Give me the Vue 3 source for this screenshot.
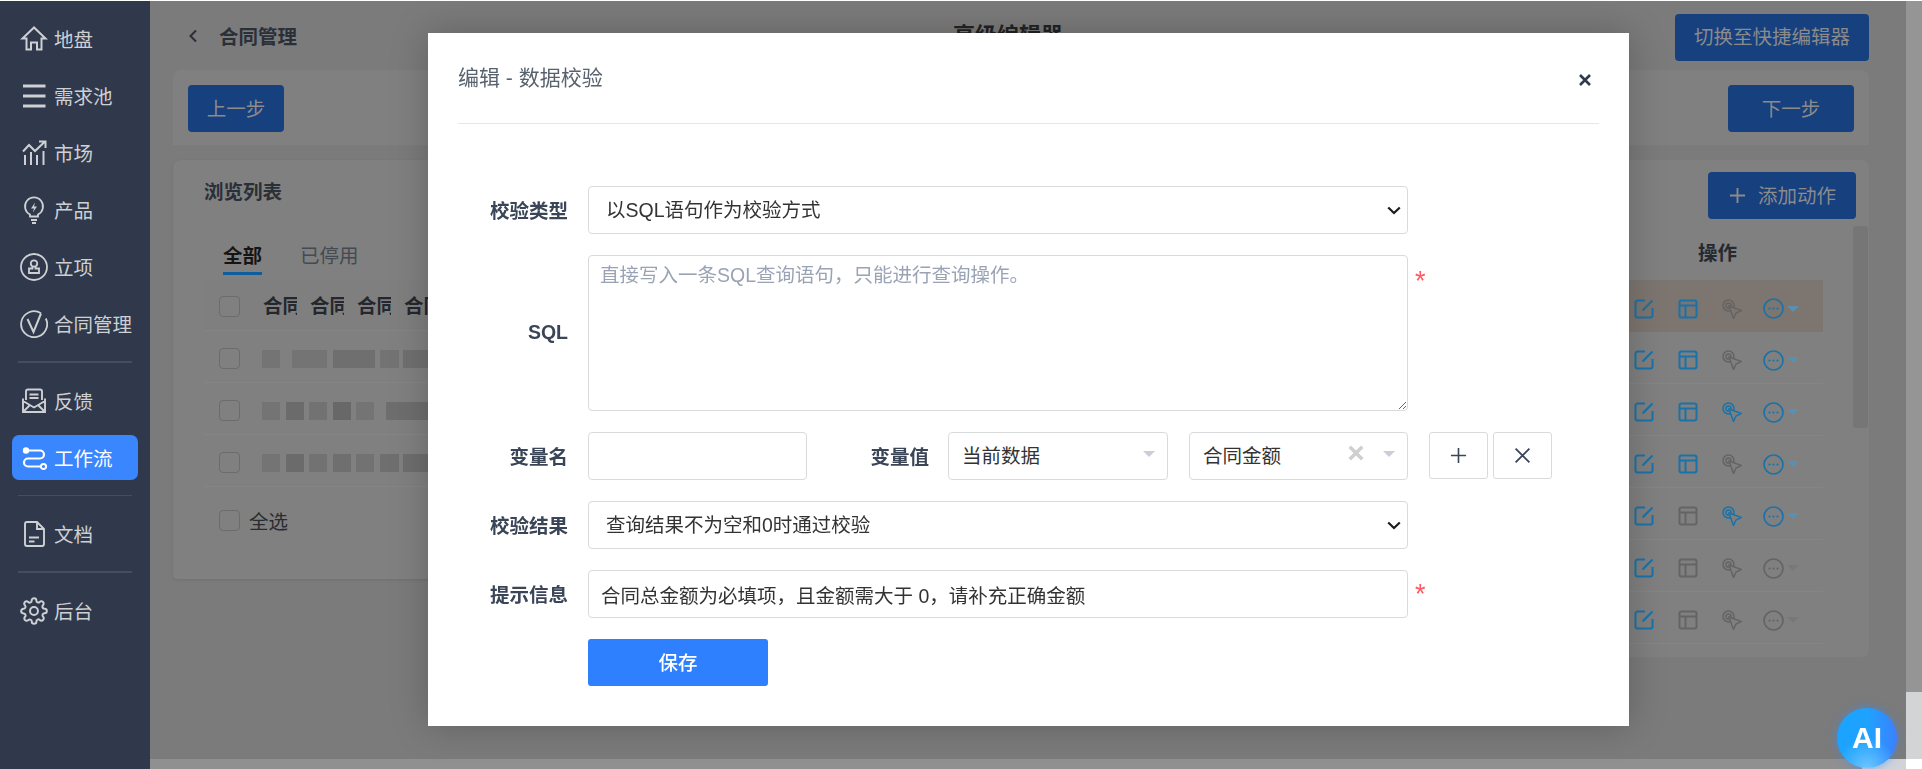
<script setup>
const circ = (cx, cy, r) => `M${cx - r} ${cy}a${r} ${r} 0 1 0 ${2 * r} 0a${r} ${r} 0 1 0 ${-2 * r} 0Z`

const navTop = [
  { label: '地盘', paths: [{ d: 'M14 2.5 2.5 13.5H6.5V24.5H11V17.5H17V24.5H21.5V13.5H25.5Z' }] },
  { label: '需求池', paths: [{ d: 'M3 4H25.5M3 14H25.5M3 24H25.5', w: 3 }] },
  { label: '市场', paths: [{ d: 'M3 12.5 9 6l6 6L25 2.5M19 2.5h6.5V9' }, { d: 'M5 26V16M11 26V13M17 26V16M23.5 26V12' }] },
  { label: '产品', paths: [{ d: 'M10 18.5A9 9 0 1 1 18 18.5V20.5H10Z', w: 1.8 }, { d: 'M11 24H17M12 27H16', w: 1.8 }, { d: 'M15 6.5 11 12.5H14L12.8 16.5 17 10.5H14Z', fill: true }] },
  { label: '立项', paths: [{ d: circ(14, 14, 13), w: 1.8 }, { d: circ(14, 10.5, 3.2) + 'M12.5 13.5V15.5H9V20H19V15.5H15.5V13.5', w: 1.8 }] },
  { label: '合同管理', paths: [{ d: 'M21 3.2A13 13 0 1 0 25.8 8.5', w: 1.8 }, { d: 'M7.5 9 13.5 22 21 3.5', w: 2 }] }
]
const navMail = { label: '反馈', paths: [{ d: 'M6 13V4.5A2 2 0 0 1 8 2.5H20A2 2 0 0 1 22 4.5V13M9.5 7.5H18.5M9.5 11H18.5' }, { d: 'M3 11.5V25H25V11.5M3 14 14 20.5 25 14M3 25 10 18M25 25 18 18' }] }
const navFlow = { label: '工作流', active: true, paths: [{ d: 'M7 6.5H20A4 4 0 0 1 20 14.5H8A4 4 0 0 0 8 22.5H20.5', w: 2.2 }, { d: circ(6, 6.5, 3.2), fill: true }, { d: circ(23.5, 22.5, 2.6), w: 2 }] }
const navDoc = { label: '文档', paths: [{ d: 'M7 2H17L24 9V24A2 2 0 0 1 22 26H7A2 2 0 0 1 5 24V4A2 2 0 0 1 7 2ZM17 2V9H24M9 17.5H19M9 21.5H14.5' }] }
const navGear = { label: '后台', gear: true, paths: [] }

const headCells = ['合同名称', '合同编号', '合同金额', '合同类型']
const blurRows = [
  [[0, 18, '#747474'], [12, 35, '#747474'], [6, 42, '#6f6f6f'], [5, 19, '#737373'], [4, 25, '#707070']],
  [[0, 18, '#747474'], [6, 18, '#6b6b6b'], [5, 18, '#727272'], [6, 18, '#686868'], [5, 18, '#747474'], [12, 42, '#6e6e6e']],
  [[0, 18, '#747474'], [6, 18, '#6b6b6b'], [5, 18, '#727272'], [6, 18, '#6f6f6f'], [5, 18, '#727272'], [6, 19, '#6f6f6f'], [4, 25, '#6e6e6e']]
]
const actionRows = [
  { hot: true, table: true, target: false, more: true },
  { table: true, target: false, more: true },
  { table: true, target: true, more: true },
  { table: true, target: false, more: true },
  { table: false, target: true, more: true },
  { table: false, target: false, more: false },
  { table: false, target: false, more: false }
]
</script>

<template>
  <div class="root">
    <aside class="sidebar">
      <template v-for="item in navTop" :key="item.label">
        <div class="nav-item">
          <svg class="nav-icon" viewBox="0 0 28 28" fill="none" stroke="currentColor" stroke-width="2">
            <path v-for="(p, i) in item.paths" :key="i" :d="p.d" :stroke-width="p.w || 2" :fill="p.fill ? 'currentColor' : 'none'" :stroke="p.fill ? 'none' : 'currentColor'" />
          </svg>
          <span>{{ item.label }}</span>
        </div>
      </template>
      <div class="nav-divider thick"></div>
      <div class="nav-item">
        <svg class="nav-icon" viewBox="0 0 28 28" fill="none" stroke="currentColor">
          <path v-for="(p, i) in navMail.paths" :key="i" :d="p.d" stroke-width="1.9" />
        </svg>
        <span>{{ navMail.label }}</span>
      </div>
      <div class="nav-item active">
        <svg class="nav-icon" viewBox="0 0 28 28" fill="none">
          <path v-for="(p, i) in navFlow.paths" :key="i" :d="p.d" :stroke-width="p.w || 2" :fill="p.fill ? 'currentColor' : 'none'" :stroke="p.fill ? 'none' : 'currentColor'" />
        </svg>
        <span>{{ navFlow.label }}</span>
      </div>
      <div class="nav-divider"></div>
      <div class="nav-item">
        <svg class="nav-icon" viewBox="0 0 28 28" fill="none" stroke="currentColor" stroke-width="1.9">
          <path v-for="(p, i) in navDoc.paths" :key="i" :d="p.d" />
        </svg>
        <span>{{ navDoc.label }}</span>
      </div>
      <div class="nav-divider thick"></div>
      <div class="nav-item">
        <svg class="nav-icon" viewBox="0 0 24 24" fill="none" stroke="currentColor" stroke-width="1.7">
          <circle cx="12" cy="12" r="3.4" />
          <path d="M19.4 15a1.65 1.65 0 0 0 .33 1.82l.06.06a2 2 0 0 1 0 2.83 2 2 0 0 1-2.83 0l-.06-.06a1.65 1.65 0 0 0-1.82-.33 1.65 1.65 0 0 0-1 1.51V21a2 2 0 0 1-2 2 2 2 0 0 1-2-2v-.09A1.65 1.65 0 0 0 9 19.4a1.65 1.65 0 0 0-1.82.33l-.06.06a2 2 0 0 1-2.83 0 2 2 0 0 1 0-2.83l.06-.06a1.65 1.65 0 0 0 .33-1.82 1.65 1.65 0 0 0-1.51-1H3a2 2 0 0 1-2-2 2 2 0 0 1 2-2h.09A1.65 1.65 0 0 0 4.6 9a1.65 1.65 0 0 0-.33-1.82l-.06-.06a2 2 0 0 1 0-2.83 2 2 0 0 1 2.83 0l.06.06a1.65 1.65 0 0 0 1.82.33H9a1.65 1.65 0 0 0 1-1.51V3a2 2 0 0 1 2-2 2 2 0 0 1 2 2v.09a1.65 1.65 0 0 0 1 1.51 1.65 1.65 0 0 0 1.82-.33l.06-.06a2 2 0 0 1 2.83 0 2 2 0 0 1 0 2.83l-.06.06a1.65 1.65 0 0 0-.33 1.82V9a1.65 1.65 0 0 0 1.51 1H21a2 2 0 0 1 2 2 2 2 0 0 1-2 2h-.09a1.65 1.65 0 0 0-1.51 1z" />
        </svg>
        <span>{{ navGear.label }}</span>
      </div>
    </aside>

    <div class="page">
      <div class="page-top">
        <main class="main">
          <header class="head">
            <div class="crumb">
              <svg class="chev" viewBox="0 0 10 14" fill="none" stroke="currentColor" stroke-width="2"><path d="M8 1.5 2.5 7 8 12.5" /></svg>
              <span>合同管理</span>
            </div>
            <div class="head-title">高级编辑器</div>
            <button class="btn switch">切换至快捷编辑器</button>
          </header>

          <section class="card steps">
            <button class="btn prev">上一步</button>
            <button class="btn next">下一步</button>
          </section>

          <section class="list">
            <div class="card list-left">
              <div class="list-title">浏览列表</div>
              <div class="tabs">
                <div class="tab on">全部</div>
                <div class="tab">已停用</div>
              </div>
              <div class="trow thead">
                <span class="check"></span>
                <div class="cells">
                  <span v-for="c in headCells" :key="c" class="hcell">{{ c.slice(0, 2) }}</span>
                </div>
              </div>
              <div v-for="(row, r) in blurRows" :key="r" class="trow">
                <span class="check"></span>
                <div class="blurs">
                  <i v-for="(b, i) in row" :key="i" :style="{ marginLeft: b[0] + 'px', width: b[1] + 'px', background: b[2] }"></i>
                </div>
              </div>
              <div class="tfoot">
                <span class="check"></span>
                <span>全选</span>
              </div>
            </div>

            <div class="card list-right">
              <button class="btn add">
                <svg viewBox="0 0 18 18" fill="none" stroke="currentColor" stroke-width="2"><path d="M9 1V17M1 9H17" /></svg>
                <span>添加动作</span>
              </button>
              <div class="act-head">操作</div>
              <div v-for="(a, i) in actionRows" :key="i" class="act-row" :class="{ hot: a.hot }">
                <svg class="ic on" viewBox="0 0 20 20" fill="none" stroke="currentColor" stroke-width="2"><path d="M11 1.5H3.5a2 2 0 0 0-2 2V16.500a2 2 0 0 0 2 2H16.500a2 2 0 0 0 2-2V9M8.500 11.500 18.500 1.500" /></svg>
                <svg class="ic" :class="{ on: a.table }" viewBox="0 0 20 20" fill="none" stroke="currentColor" stroke-width="2"><rect x="1.500" y="1.500" width="17" height="17" rx="2" /><path d="M1.500 6.500H18.500M7.500 6.500V18.500" /></svg>
                <svg class="ic target" :class="{ on: a.target }" viewBox="0 0 20 20" fill="none" stroke="currentColor" stroke-width="1.500"><circle cx="6.500" cy="6.500" r="5.500" /><circle cx="6.500" cy="6.500" r="2.600" /><path class="arrow" d="M7 7 19.500 11.500 14 14 11.500 19.500Z" /></svg>
                <svg class="ic more" :class="{ on: a.more }" viewBox="0 0 21 21" fill="none" stroke="currentColor" stroke-width="1.700"><circle cx="10.500" cy="10.500" r="9.500" /><circle cx="6.500" cy="10.500" r="1.100" fill="currentColor" stroke="none" /><circle cx="10.500" cy="10.500" r="1.100" fill="currentColor" stroke="none" /><circle cx="14.500" cy="10.500" r="1.100" fill="currentColor" stroke="none" /></svg>
                <span class="act-caret" :class="{ on: a.more }"></span>
              </div>
              <div class="thumb"></div>
            </div>
          </section>
        </main>
        <div class="vbar"><div class="vbar-a"></div><div class="vbar-b"></div></div>
      </div>
      <div class="hbar"><div class="hbar-a"></div><div class="hbar-b"></div><div class="hbar-c"></div></div>
    </div>

    <div class="modal">
      <div class="modal-head">
        <span>编辑 - 数据校验</span>
        <svg class="close" viewBox="0 0 14 14" fill="none" stroke="currentColor" stroke-width="2.600"><path d="M2 2 12 12M12 2 2 12" /></svg>
      </div>
      <form class="form" @submit.prevent>
        <div class="row">
          <label class="lbl">校验类型</label>
          <div class="sel-wrap">
            <select class="ctl sel">
              <option>以SQL语句作为校验方式</option>
            </select>
            <svg class="sel-chev" viewBox="0 0 14 9" fill="none" stroke="currentColor" stroke-width="2.200"><path d="M1.200 1.500 7 7 12.800 1.500" /></svg>
          </div>
        </div>
        <div class="row area-row">
          <label class="lbl">SQL</label>
          <textarea class="ctl area" placeholder="直接写入一条SQL查询语句，只能进行查询操作。"></textarea>
          <span class="star top">*</span>
        </div>
        <div class="row">
          <label class="lbl">变量名</label>
          <input class="ctl var-input" type="text" />
          <label class="lbl lbl-b">变量值</label>
          <div class="ctl pick">
            <span class="pick-text">当前数据</span>
            <span class="caret"></span>
          </div>
          <div class="ctl pick second">
            <span class="pick-text">合同金额</span>
            <svg class="clear" viewBox="0 0 14 14" fill="none" stroke="currentColor" stroke-width="3"><path d="M1.500 1.500 12.500 12.500M12.500 1.500 1.500 12.500" /></svg>
            <span class="caret"></span>
          </div>
          <button type="button" class="sq first">
            <svg viewBox="0 0 18 18" fill="none" stroke="currentColor" stroke-width="1.700"><path d="M9 1V17M1 9H17" /></svg>
          </button>
          <button type="button" class="sq">
            <svg viewBox="0 0 16 16" fill="none" stroke="currentColor" stroke-width="1.700"><path d="M1.500 1.500 14.500 14.500M14.500 1.500 1.500 14.500" /></svg>
          </button>
        </div>
        <div class="row">
          <label class="lbl">校验结果</label>
          <div class="sel-wrap">
            <select class="ctl sel">
              <option>查询结果不为空和0时通过校验</option>
            </select>
            <svg class="sel-chev" viewBox="0 0 14 9" fill="none" stroke="currentColor" stroke-width="2.200"><path d="M1.200 1.500 7 7 12.800 1.500" /></svg>
          </div>
        </div>
        <div class="row">
          <label class="lbl">提示信息</label>
          <input class="ctl hint" type="text" value="合同总金额为必填项，且金额需大于 0，请补充正确金额" />
          <span class="star">*</span>
        </div>
        <div class="row save-row">
          <button type="button" class="save">保存</button>
        </div>
      </form>
    </div>

    <div class="ai">AI</div>
  </div>
</template>

<style>
html, body { margin: 0; padding: 0; overflow: hidden; background: #fff; }
</style>

<style scoped>
.root {
  display: flex;
  width: 1922px;
  height: 769px;
  overflow: hidden;
  font-family: "Liberation Sans", "Noto Sans CJK SC", sans-serif;
  font-size: 19.5px;
}
button, select, input, textarea { font-family: inherit; font-size: inherit; }

.sidebar {
  width: 150px;
  flex: none;
  box-sizing: border-box;
  padding-top: 9px;
  margin-top: 1px;
  background: #2f394b;
  color: #ced0d4;
  display: flex;
  flex-direction: column;
}
.nav-item {
  height: 45px;
  flex: none;
  margin: 6px 12px;
  padding-left: 8px;
  box-sizing: border-box;
  display: flex;
  align-items: center;
  gap: 6px;
  border-radius: 7px;
  white-space: nowrap;
}
.nav-item.active { background: #3a86ff; color: #fff; }
.nav-icon { width: 28px; height: 28px; flex: none; }
.nav-divider { height: 1px; flex: none; margin: 9px 18px; background: #434e61; }
.nav-divider.thick { height: 2px; }

.page { flex: 1; display: flex; flex-direction: column; min-width: 0; }
.page-top { flex: none; height: 758px; margin-top: 1px; display: flex; }
.main {
  flex: 1;
  min-width: 0;
  box-sizing: border-box;
  padding: 0 37px 0 23px;
  background: #7b7b7b;
}
.vbar { width: 16px; flex: none; display: flex; flex-direction: column; }
.vbar-a { height: 691px; background: #959595; }
.vbar-b { flex: 1; background: #d3d4d6; }
.hbar { flex: none; height: 10px; display: flex; }
.hbar-a { flex: 1; background: #909090; }
.hbar-b { width: 44px; background: #d0d3d8; }
.hbar-c { width: 16px; background: #fff; }

.head {
  height: 69px;
  display: grid;
  grid-template-columns: 1fr auto 1fr;
  align-items: center;
}
.crumb {
  display: flex;
  align-items: center;
  padding-left: 15px;
  gap: 21px;
  font-weight: 700;
  color: #2a2f38;
}
.chev { width: 10px; height: 14px; flex: none; color: #2a2f38; }
.head-title {
  font-size: 22px;
  font-weight: 700;
  color: #222;
  margin: 0 26px 6px 0;
}
.btn {
  height: 47px;
  border: 0;
  border-radius: 4px;
  background: #17407f;
  color: #8b8b8b;
  padding: 0 0 3px;
}
.switch { width: 194px; justify-self: end; margin-top: 3px; }
.card { background: #808080; border-radius: 8px; }
.steps {
  height: 75px;
  box-sizing: border-box;
  padding: 15px 15px 13px;
  display: flex;
  justify-content: space-between;
  border-radius: 8px 8px 0 0;
}
.prev { width: 96px; }
.next { width: 126px; }

.list { display: flex; align-items: flex-start; margin-top: 15px; }
.list-left {
  flex: 1;
  height: 419px;
  box-sizing: border-box;
  padding-left: 31px;
  overflow: hidden;
  border-radius: 8px 0 0 4px;
  box-shadow: 0 1px 3px rgba(0, 0, 0, .1);
}
.list-title {
  height: 64px;
  line-height: 64px;
  font-weight: 700;
  color: #2a2f38;
}
.tabs { display: flex; gap: 38px; padding: 17px 0 0 19px; height: 34px; margin-bottom: 4px; }
.tab { height: 34px; line-height: 31px; box-sizing: border-box; color: #444a52; }
.tab.on { font-weight: 700; color: #151515; border-bottom: 3px solid #0f5d9a; }
.trow {
  height: 52px;
  box-sizing: border-box;
  display: flex;
  align-items: center;
  padding: 4px 0 0 15px;
  border-bottom: 1px solid #858585;
}
.thead { background: #7f7f7f; }
.check {
  width: 21px;
  height: 21px;
  flex: none;
  box-sizing: border-box;
  border: 1px solid #6c6c6c;
  border-radius: 4px;
  background: #808080;
}
.cells { display: flex; gap: 13px; margin: 0 0 5px 23px; }
.hcell {
  width: 34px;
  overflow: hidden;
  white-space: nowrap;
  font-weight: 700;
  color: #24282e;
}
.blurs { display: flex; margin-left: 22px; height: 18px; }
.blurs i { display: block; flex: none; height: 18px; }
.tfoot {
  height: 65px;
  box-sizing: border-box;
  padding: 1px 0 0 15px;
  display: flex;
  align-items: center;
  gap: 9px;
  color: #2a2c30;
}

.list-right {
  width: 469px;
  flex: none;
  height: 497px;
  box-sizing: border-box;
  padding-top: 12px;
  position: relative;
  border-radius: 0 8px 8px 0;
}
.add {
  display: flex;
  align-items: center;
  gap: 12px;
  width: 148px;
  padding-left: 21px;
  box-sizing: border-box;
  margin-left: 308px;
}
.add svg { width: 17px; height: 17px; flex: none; margin-top: 3px; }
.act-head {
  height: 61px;
  box-sizing: border-box;
  margin-left: 220px;
  padding: 16px 0 0 78px;
  line-height: 36px;
  font-weight: 700;
  color: #26292f;
}
.act-row {
  width: 203px;
  margin-left: 220px;
  height: 52px;
  box-sizing: border-box;
  border-bottom: 1px solid #858585;
  display: flex;
  align-items: center;
  padding: 5px 0 0 14px;
  gap: 24px;
  --row-bg: #808080;
}
.act-row.hot { background: #7d7570; border-bottom: 0; --row-bg: #7d7570; }
.ic { width: 20px; height: 20px; flex: none; color: #646464; }
.ic.on { color: #1a72a9; }
.arrow { fill: var(--row-bg); }
.ic.more { width: 21px; height: 21px; margin-left: -3px; }
.act-caret {
  width: 0;
  height: 0;
  margin-left: -21px;
  border-left: 6px solid transparent;
  border-right: 6px solid transparent;
  border-top: 6px solid #787878;
}
.act-caret.on { border-top-color: #5b8faf; }
.thumb {
  position: absolute;
  right: 1px;
  top: 66px;
  width: 15px;
  height: 202px;
  border-radius: 3px;
  background: #767676;
}

.modal {
  position: fixed;
  left: 428px;
  top: 33px;
  width: 1201px;
  height: 693px;
  box-sizing: border-box;
  padding: 0 30px;
  background: #fff;
  box-shadow: 0 0 36px rgba(0, 0, 0, .22);
}
.modal-head {
  height: 91px;
  box-sizing: border-box;
  display: flex;
  align-items: center;
  justify-content: space-between;
  padding-bottom: 4px;
  border-bottom: 1px solid #e6e7e9;
  font-size: 21px;
  color: #58626f;
}
.close { width: 14px; height: 14px; margin: 8px 7px 0 0; color: #2f3a4d; }
.form { padding-top: 62px; display: flex; flex-direction: column; gap: 21px; }
.row { display: flex; align-items: center; height: 48px; }
.area-row { height: 156px; }
.save-row { height: 47px; padding-left: 130px; }
.lbl {
  width: 110px;
  flex: none;
  margin-right: 20px;
  padding-bottom: 1px;
  text-align: right;
  font-weight: 700;
  color: #3a4557;
}
.lbl-b { width: 101px; margin: 0 19px 0 21px; }
.ctl {
  box-sizing: border-box;
  height: 48px;
  border: 1px solid #d9dadc;
  border-radius: 4px;
  background: #fff;
  color: #333;
  outline: none;
}
.sel-wrap { position: relative; width: 820px; height: 48px; flex: none; }
.sel {
  width: 100%;
  appearance: none;
  padding-left: 17px;
}
.sel-chev {
  position: absolute;
  right: 7px;
  top: 20px;
  width: 14px;
  height: 9px;
  color: #1a1c20;
  pointer-events: none;
}
.area {
  width: 820px;
  height: 156px;
  padding: 6px 11px;
  line-height: 26px;
  resize: vertical;
}
.area::placeholder { color: #9aa3b4; opacity: 1; }
.var-input { width: 219px; }
.hint { width: 820px; padding: 0 12px; }
.pick {
  width: 220px;
  flex: none;
  position: relative;
  display: flex;
  align-items: center;
  padding-left: 13px;
  padding-bottom: 3px;
}
.pick.second { width: 219px; margin-left: 21px; }
.caret {
  position: absolute;
  right: 12px;
  top: 18px;
  width: 0;
  height: 0;
  border-left: 6px solid transparent;
  border-right: 6px solid transparent;
  border-top: 6px solid #c9ced9;
}
.clear {
  position: absolute;
  right: 43px;
  top: 12px;
  width: 16px;
  height: 16px;
  color: #cfcfcf;
}
.sq {
  width: 59px;
  height: 47px;
  flex: none;
  margin-left: 5px;
  margin-bottom: 1px;
  padding: 0;
  border: 1px solid #d9dadc;
  border-radius: 3px;
  background: #fff;
  color: #3a4557;
  display: flex;
  align-items: center;
  justify-content: center;
}
.sq.first { margin-left: 21px; }
.sq svg { width: 17px; height: 17px; }
.star {
  margin-left: 7px;
  color: #ff5a5f;
  font-size: 27px;
  line-height: 22px;
  height: 22px;
  margin-top: 0;
}
.star.top { align-self: flex-start; margin-top: 15px; }
.save {
  width: 180px;
  height: 47px;
  border: 0;
  border-radius: 3px;
  background: #2f80ff;
  color: #fff;
  font-weight: 500;
  padding: 0 0 3px;
}
.ai {
  position: fixed;
  left: 1837px;
  top: 708px;
  width: 60px;
  height: 60px;
  border-radius: 50%;
  display: flex;
  align-items: center;
  justify-content: center;
  background:
    radial-gradient(circle at 50% 100%, #6cc4ff 0, rgba(108, 196, 255, 0) 45%),
    linear-gradient(90deg, #1aa3ff 0%, #1ea3ff 50%, #3c80ff 100%);
  box-shadow: 0 0 8px rgba(50, 140, 255, .6);
  color: #fff;
  font-size: 30px;
  font-weight: 700;
}
</style>
